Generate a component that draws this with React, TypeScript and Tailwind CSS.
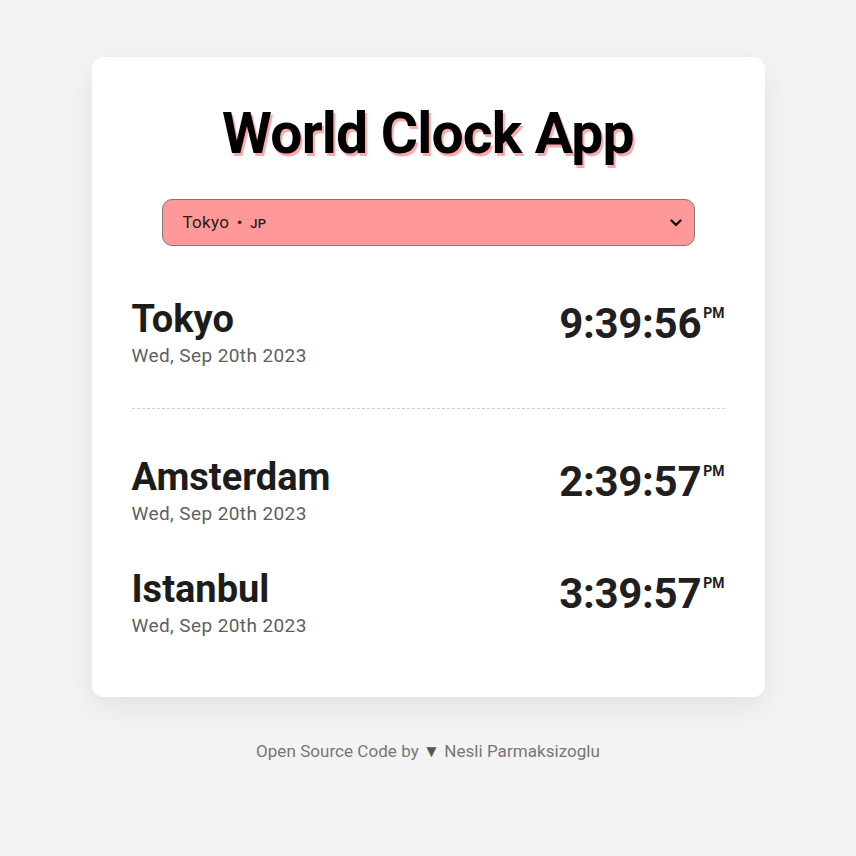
import React from 'react';

interface City {
  name: string;
  date: string;
  time: string;
  period: string;
}

const cities: City[] = [
  { name: 'Tokyo', date: 'Wed, Sep 20th 2023', time: '9:39:56', period: 'PM' },
  { name: 'Amsterdam', date: 'Wed, Sep 20th 2023', time: '2:39:57', period: 'PM' },
  { name: 'Istanbul', date: 'Wed, Sep 20th 2023', time: '3:39:57', period: 'PM' },
];

const CityRow: React.FC<{ city: City }> = ({ city }) => (
  <div className="flex items-start justify-between">
    <div>
      <h2 className="text-[38px] leading-[44px] font-bold text-[#1c1c1c]">{city.name}</h2>
      <p className="mt-[3px] text-[19px] leading-[24px] text-[#5f5f5f] tracking-[0.4px]">{city.date}</p>
    </div>
    <div className="flex items-start mt-[3px]">
      <span className="text-[42px] leading-[48px] font-bold text-[#1f1f1f] tracking-[-0.3px]">{city.time}</span>
      <span className="ml-[2px] mt-[6px] text-[14px] leading-[14px] font-bold text-[#1f1f1f]">{city.period}</span>
    </div>
  </div>
);

const App: React.FC = () => {
  return (
    <div className="min-h-screen bg-[#f3f3f3] flex flex-col items-center pt-[57px] font-['Roboto','Liberation_Sans',sans-serif]">
      <div className="w-[673px] bg-white rounded-xl shadow-[0_10px_30px_rgba(0,0,0,0.07)] px-10 pt-[42px] pb-[59px]">
        <h1 className="text-center text-[57px] leading-[70px] font-bold text-black tracking-[-0.8px] [text-shadow:2px_3px_0_#ffaaaa]">
          World Clock App
        </h1>

        <div className="mt-[30px] mx-[30px] h-[47px] rounded-[10px] border border-[#7a7a7a] bg-[#ff9999] flex items-center justify-between pl-[20px] pr-[12px]">
          <span className="text-[17px] text-[#2a1a1a] tracking-[0.3px]">
            Tokyo <span className="mx-[3px]">•</span> <span className="text-[13px] font-medium">JP</span>
          </span>
          <svg width="12" height="8" viewBox="0 0 12 8" fill="none">
            <path d="M1.5 1.5L6 6L10.5 1.5" stroke="#111" strokeWidth="2.4" strokeLinecap="round" strokeLinejoin="round" />
          </svg>
        </div>

        <div className="mt-[51px]">
          <CityRow city={cities[0]} />
        </div>

        <div className="mt-[40px] border-t border-dashed border-[#cfcfcf]" />

        <div className="mt-[46px]">
          <CityRow city={cities[1]} />
        </div>
        <div className="mt-[41px]">
          <CityRow city={cities[2]} />
        </div>
      </div>

      <p className="mt-[42px] text-[17px] text-[#777] tracking-[0.05px]">
        Open Source Code by <span className="text-[#555]">▼</span> Nesli Parmaksizoglu
      </p>
    </div>
  );
};

export default App;
